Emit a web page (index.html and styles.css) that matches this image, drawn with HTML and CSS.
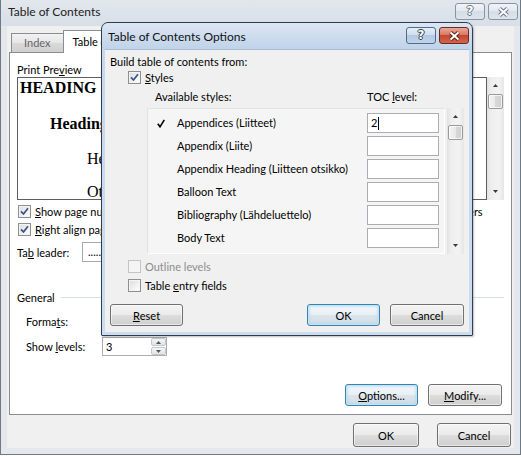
FILE: index.html
```html
<!DOCTYPE html>
<html>
<head>
<meta charset="utf-8">
<link rel="stylesheet" href="styles.css">
</head>
<body>
<div class="outer">
  <div class="titlebar">
    <span class="wtitle">Table of Contents</span>
    <div class="capbtns">
      <span class="cap help off">?</span>
      <span class="cap close off"><svg width="13" height="10" viewBox="0 0 13 10"><path d="M2.5 1.5 10.5 8.5 M10.5 1.5 2.5 8.5" stroke="#6b7886" stroke-width="4"/><path d="M2.5 1.5 10.5 8.5 M10.5 1.5 2.5 8.5" stroke="#fff" stroke-width="2"/></svg></span>
    </div>
  </div>
  <div class="client">
    <div class="tabs">
      <span class="tab">Index</span>
      <span class="tab active">Table of Contents</span>
      <span class="tab blank"></span>
    </div>
    <div class="panel">
      <div class="cols">
        <div class="col">
          <div class="lbl">Print Pre<u>v</u>iew</div>
          <div class="preview">
            <div class="doc">
              <div class="p1">HEADING 1</div>
              <div class="p2">Heading 2</div>
              <div class="p3">Heading 3</div>
              <div class="p4">Other</div>
            </div>
            <div class="vscroll">
              <span class="arr"><svg width="5" height="3" viewBox="0 0 5 3"><path d="M0 3 2.5 0 5 3z" fill="#3a3a3a"/></svg></span>
              <span class="thumb"></span>
              <span class="sp"></span>
              <span class="arr"><svg width="5" height="3" viewBox="0 0 5 3"><path d="M0 0 2.5 3 5 0z" fill="#3a3a3a"/></svg></span>
            </div>
          </div>
          <div class="chk r1"><span class="cb"><svg width="9" height="9" viewBox="0 0 9 9"><path d="M1 4.4 3.5 7 8 1.3" fill="none" stroke="#3d5589" stroke-width="1.8"/></svg></span><span><u>S</u>how page numbers</span></div>
          <div class="chk r2"><span class="cb"><svg width="9" height="9" viewBox="0 0 9 9"><path d="M1 4.4 3.5 7 8 1.3" fill="none" stroke="#3d5589" stroke-width="1.8"/></svg></span><span><u>R</u>ight align page numbers</span></div>
          <div class="leader"><span class="llbl">Ta<u>b</u> leader:</span><span class="combo">.......</span></div>
        </div>
        <div class="col">
          <div class="lbl"></div>
          <div class="preview">
            <div class="doc web"></div>
            <div class="vscroll">
              <span class="arr"><svg width="5" height="3" viewBox="0 0 5 3"><path d="M0 3 2.5 0 5 3z" fill="#3a3a3a"/></svg></span>
              <span class="thumb"></span>
              <span class="sp"></span>
              <span class="arr"><svg width="5" height="3" viewBox="0 0 5 3"><path d="M0 0 2.5 3 5 0z" fill="#3a3a3a"/></svg></span>
            </div>
          </div>
          <div class="chk r1 hyp"><span class="cb"><svg width="9" height="9" viewBox="0 0 9 9"><path d="M1 4.4 3.5 7 8 1.3" fill="none" stroke="#3d5589" stroke-width="1.8"/></svg></span><span>Use <u>h</u>yperlinks instead of page numbers</span></div>
        </div>
      </div>
      <div class="group">General</div>
      <div class="frow f1"><span class="flbl">Forma<u>t</u>s:</span><span class="combo wide"></span></div>
      <div class="frow f2"><span class="flbl">Show <u>l</u>evels:</span>
        <span class="spin"><span class="val">3</span>
          <span class="sbtns">
            <span class="sb"><svg width="5" height="3" viewBox="0 0 5 3"><path d="M0 3 2.5 0 5 3z" fill="#555"/></svg></span>
            <span class="sb"><svg width="5" height="3" viewBox="0 0 5 3"><path d="M0 0 2.5 3 5 0z" fill="#555"/></svg></span>
          </span>
        </span>
      </div>
      <div class="actions"><span class="btn def opt"><u>O</u>ptions...</span><span class="btn mod"><u>M</u>odify...</span></div>
    </div>
    <div class="footer"><span class="btn ok">OK</span><span class="btn cancel">Cancel</span></div>
  </div>
</div>

<div class="dlg">
  <div class="dtitlebar">
    <span class="dtitle">Table of Contents Options</span>
    <div class="dcaps">
      <span class="cap help on">?</span>
      <span class="cap close red"><svg width="13" height="10" viewBox="0 0 13 10"><path d="M2.5 1.5 10.5 8.5 M10.5 1.5 2.5 8.5" stroke="#5a2118" stroke-width="4"/><path d="M2.5 1.5 10.5 8.5 M10.5 1.5 2.5 8.5" stroke="#fff" stroke-width="2"/></svg></span>
    </div>
  </div>
  <div class="dclient">
    <div class="build">Build table of contents from:</div>
    <div class="dchk styles"><span class="cb"><svg width="9" height="9" viewBox="0 0 9 9"><path d="M1 4.4 3.5 7 8 1.3" fill="none" stroke="#3d5589" stroke-width="1.8"/></svg></span><span><u>S</u>tyles</span></div>
    <div class="hdr"><span class="h-av">Available styles:</span><span>TOC <u>l</u>evel:</span></div>
    <div class="listwrap">
      <div class="list">
        <div class="row"><span class="mk"><svg width="8" height="9" viewBox="0 0 8 9"><path d="M0.8 4.8 3 7.8 7.3 0.8" fill="none" stroke="#000" stroke-width="1.6"/></svg></span><span class="nm">Appendices (Liitteet)</span><span class="lv">2<span class="caret"></span></span></div>
        <div class="row"><span class="mk"></span><span class="nm">Appendix (Liite)</span><span class="lv"></span></div>
        <div class="row"><span class="mk"></span><span class="nm">Appendix Heading (Liitteen otsikko)</span><span class="lv"></span></div>
        <div class="row"><span class="mk"></span><span class="nm">Balloon Text</span><span class="lv"></span></div>
        <div class="row"><span class="mk"></span><span class="nm">Bibliography (Lähdeluettelo)</span><span class="lv"></span></div>
        <div class="row"><span class="mk"></span><span class="nm">Body Text</span><span class="lv"></span></div>
      </div>
      <div class="vscroll lscroll">
        <span class="arr"><svg width="5" height="3" viewBox="0 0 5 3"><path d="M0 3 2.5 0 5 3z" fill="#3a3a3a"/></svg></span>
        <span class="thumb"></span>
        <span class="sp"></span>
        <span class="arr"><svg width="5" height="3" viewBox="0 0 5 3"><path d="M0 0 2.5 3 5 0z" fill="#3a3a3a"/></svg></span>
      </div>
    </div>
    <div class="dchk outline dis"><span class="cb off"></span><span>Outline levels</span></div>
    <div class="dchk entry"><span class="cb"></span><span>Table <u>e</u>ntry fields</span></div>
    <div class="dbtns">
      <span class="btn reset"><u>R</u>eset</span>
      <span class="rgt"><span class="btn def dok">OK</span><span class="btn dcancel">Cancel</span></span>
    </div>
  </div>
</div>
</body>
</html>
```

FILE: styles.css
```css
* { box-sizing: border-box; }
html, body { margin: 0; padding: 0; }
body {
  width: 521px; height: 457px; overflow: hidden; position: relative;
  background: #ffffff;
  font-family: Lato, "Liberation Sans", sans-serif;
  font-size: 11px; line-height: 15px; color: #000;
}
u { text-decoration: underline; text-underline-offset: 1px; }

/* ---------- outer window ---------- */
.outer {
  width: 521px; height: 455px;
  border: 1px solid #6e7986; border-top: 0;
  background: linear-gradient(#e2e7ed, #d8dfe7 26px, #e4e8ec 26px, #e4e8ec);
  padding: 0 6px 6px;
  display: flex; flex-direction: column;
}
.titlebar { height: 26px; display: flex; justify-content: space-between; align-items: flex-start; }
.wtitle { font-size: 12px; line-height: 16px; margin: 4px 0 0 1px; color: #222; }
.capbtns { display: flex; gap: 3px; margin: 3px -4px 0 0; }
.cap {
  width: 30px; height: 17px; border-radius: 3px;
  display: flex; align-items: center; justify-content: center;
  font-family: "DejaVu Sans", sans-serif; font-weight: bold; font-size: 12px; line-height: 15px;
  color: #fff;
}
.cap.off {
  border: 1px solid #8794a3;
  background: linear-gradient(#f1f4f7, #e2e8ee 50%, #d5dde6 50%, #dde4eb);
  text-shadow: -1px 0 #6b7886, 1px 0 #6b7886, 0 -1px #6b7886, 0 1px #6b7886;
}
.cap.on {
  border: 1px solid #4f6b8e;
  background: linear-gradient(#e6eef8, #cddcee 50%, #b3c9e3 50%, #c0d4ea);
  text-shadow: -1px 0 #2f3f52, 1px 0 #2f3f52, 0 -1px #2f3f52, 0 1px #2f3f52;
}
.cap.red {
  border: 1px solid #6e2a1e;
  background: linear-gradient(#eaa898, #d7755f 50%, #c24a32 50%, #d0654a);
}

.client {
  flex: 1; background: #f0f0f0;
  padding: 4px 2px 0;
  display: flex; flex-direction: column;
}
.tabs { display: flex; align-items: flex-end; height: 22px; padding-left: 2px; position: relative; z-index: 1; }
.tab {
  height: 19px; padding: 0 12px;
  border: 1px solid #898c95; border-bottom: 0;
  background: linear-gradient(#f2f2f2, #e6e6e6 50%, #d9d9d9 50%, #d0d0d0);
  color: #666; line-height: 18px; margin-right: -1px; white-space: nowrap;
}
.tab.active {
  height: 23px; background: #fff; color: #000;
  padding: 0 9px; line-height: 22px; margin-bottom: -1px;
}
.tab.blank { width: 120px; }
.panel {
  height: 363px; border: 1px solid #898c95; background: #fff;
  padding: 9px 7px 0;
}
.cols { display: grid; grid-template-columns: 234px 243px; column-gap: 10px; }
.lbl { height: 15px; white-space: nowrap; }
.preview { display: flex; height: 123px; }
.doc {
  flex: 1; background: #fff; border: 1px solid #5e5e5e; overflow: hidden;
  font-family: "Liberation Serif", serif; font-size: 16px; line-height: 18px; white-space: nowrap;
  padding: 1px 0 0 2px;
}
.p1 { font-weight: bold; }
.p2 { font-weight: bold; padding-left: 30px; margin-top: 18px; }
.p3 { padding-left: 67px; margin-top: 17px; }
.p4 { padding-left: 67px; margin-top: 15px; }

.vscroll {
  width: 17px; display: flex; flex-direction: column; align-items: center;
  background: linear-gradient(to right, #e3e3e3, #eeeeee 25%, #f3f3f3 70%, #e6e6e6);
}
.vscroll .arr { height: 17px; width: 17px; display: flex; align-items: center; justify-content: center; }
.vscroll .thumb {
  width: 15px; height: 15px; border: 1px solid #9a9a9a; border-radius: 2px;
  background: linear-gradient(to right, #f4f4f4, #e8e8e8 50%, #d8d8d8 50%, #d0d0d0);
  box-shadow: inset 0 0 0 1px rgba(255,255,255,.7);
}
.vscroll .sp { flex: 1; }

.cb {
  width: 13px; height: 13px; flex: none;
  border: 1px solid #8e8f8f;
  background: linear-gradient(135deg, #dadada, #f6f6f6 70%, #fdfdfd);
  box-shadow: inset 0 0 0 1px #f4f4f4;
  display: flex; align-items: center; justify-content: center;
}
.cb.off { border-color: #c4c4c4; background: #f4f4f4; box-shadow: none; }
.chk { display: flex; align-items: center; gap: 4px; height: 15px; margin-left: 1px; white-space: nowrap; }
.chk.r1 { margin-top: 4px; }
.chk.r2 { margin-top: 3px; }
.chk.hyp { margin-left: 13px; }
.leader { display: flex; align-items: center; margin-top: 5px; height: 20px; }
.llbl { width: 65px; }
.combo {
  width: 150px; height: 20px; border: 1px solid #a9a9a9; background: #fff;
  padding: 0 5px; line-height: 18px; white-space: nowrap;
}
.combo.wide { width: 150px; height: 19px; line-height: 17px; }

.group { display: flex; align-items: center; gap: 6px; margin-top: 28px; height: 15px; }
.group::after { content: ""; flex: 1; height: 1px; background: #d5dfe5; }
.frow { display: flex; align-items: center; height: 19px; padding-left: 9px; }
.frow.f1 { margin-top: 7px; }
.frow.f2 { margin-top: 6px; }
.flbl { width: 76px; }
.spin {
  width: 65px; height: 19px; border: 1px solid #abadb3; background: #fff;
  display: flex; justify-content: space-between;
}
.spin .val { padding-left: 3px; line-height: 17px; }
.sbtns { width: 15px; display: flex; flex-direction: column; gap: 1px; }
.sb {
  flex: 1; display: flex; align-items: center; justify-content: center;
  border: 1px solid #c4c8cd; border-radius: 2px;
  background: linear-gradient(#f6f6f6, #e3e3e3);
}

.btn {
  display: flex; align-items: center; justify-content: center;
  height: 22px; border: 1px solid #707070; border-radius: 3px;
  background: linear-gradient(#f3f3f3, #ebebeb 50%, #dddddd 50%, #cfcfcf);
  box-shadow: inset 0 0 0 1px rgba(255,255,255,.55);
  white-space: nowrap;
}
.btn.def {
  border-color: #3c7fb1;
  background: linear-gradient(#f2f7fb, #e9eff4 50%, #dce5ec 50%, #d2dde6);
  box-shadow: inset 0 0 0 1px #c4e5f6, inset 0 0 2px 2px rgba(150,210,240,.45);
}
.actions { display: flex; justify-content: flex-end; gap: 10px; margin-top: 28px; padding-right: 2px; }
.opt { width: 73px; }
.mod { width: 74px; }
.footer { display: flex; justify-content: flex-end; gap: 18px; margin-top: 8px; padding-right: 1px; }
.footer .btn { height: 24px; }
.ok { width: 66px; }
.cancel { width: 74px; }

/* ---------- inner dialog ---------- */
.dlg {
  position: absolute; left: 101px; top: 22px; z-index: 10;
  width: 372px; height: 314px;
  border: 1px solid #2c3e52; border-radius: 7px 7px 1px 1px;
  background: linear-gradient(#dbe6f3, #c0d3e9 26px, #c7d8ec 27px, #cddcee);
  padding: 0 3px 3px;
  display: flex; flex-direction: column;
  box-shadow: 1px 1px 2px rgba(0,0,0,.25);
}
.dtitlebar { height: 26px; display: flex; justify-content: space-between; align-items: flex-start; }
.dtitle { font-size: 12px; line-height: 16px; margin: 6px 0 0 3px; color: #111; }
.dcaps { display: flex; gap: 3px; margin-top: 4px; }
.dclient {
  flex: 1; background: #f0f0f0; padding: 4px 5px 0;
  border-top: 1px solid #a8bcd2;
}
.build { height: 15px; }
.dchk { display: flex; align-items: center; gap: 4px; height: 15px; margin-left: 18px; white-space: nowrap; }
.dchk.styles { margin-top: 1px; }
.dchk.outline { margin-top: 5px; }
.dchk.entry { margin-top: 4px; }
.dchk.dis { color: #8d8d8d; }
.hdr { display: flex; margin-top: 4px; padding-left: 45px; height: 15px; }
.h-av { width: 212px; }
.listwrap { display: flex; gap: 2px; margin: 4px 0 0 37px; height: 146px; }
.list {
  width: 299px; height: 146px; overflow: hidden;
  background: #f5f5f5;
  border: 1px solid; border-color: #e2e2e2 #ffffff #ffffff #e2e2e2;
  padding-top: 4px;
}
.row { display: grid; grid-template-columns: 29px 190px 72px; height: 23px; align-items: start; }
.row .mk { padding: 6px 0 0 9px; height: 20px; }
.row .mk svg { display: block; }
.row .nm { line-height: 20px; white-space: nowrap; }
.row .lv {
  height: 20px; border: 1px solid #abadb3; background: #fff;
  padding-left: 3px; line-height: 18px; display: flex; align-items: center;
}
.caret { display: inline-block; width: 1px; height: 13px; background: #000; margin-left: 1px; }
.lscroll { height: 146px; }
.dbtns { display: flex; justify-content: space-between; margin-top: 11px; }
.reset { width: 73px; }
.rgt { display: flex; gap: 10px; }
.dok { width: 73px; }
.dcancel { width: 74px; }
```
